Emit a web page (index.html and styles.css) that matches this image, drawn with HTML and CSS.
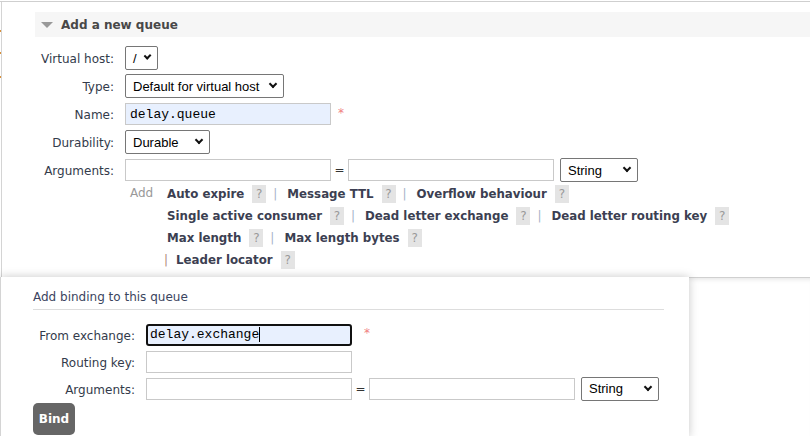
FILE: index.html
```html
<!DOCTYPE html>
<html>
<head>
<meta charset="utf-8">
<link rel="stylesheet" href="styles.css">
</head>
<body>
<div class="top">
  <div class="edge">
    <span class="tick t1"></span>
    <span class="tick t2"></span>
    <span class="tick t3"></span>
  </div>
  <div class="queue-panel">
    <div class="section-head"><span class="tri"></span>Add a new queue</div>
    <div class="form">
      <label class="lbl">Virtual host:</label>
      <div class="ctl"><span class="sel sel-vhost">/<span class="chev"></span></span></div>

      <label class="lbl">Type:</label>
      <div class="ctl"><span class="sel sel-type">Default for virtual host<span class="chev"></span></span></div>

      <label class="lbl">Name:</label>
      <div class="ctl"><span class="inp filled mono">delay.queue</span><span class="req">*</span></div>

      <label class="lbl">Durability:</label>
      <div class="ctl"><span class="sel sel-dur">Durable<span class="chev"></span></span></div>

      <label class="lbl">Arguments:</label>
      <div class="ctl"><span class="inp"></span><span class="eq">=</span><span class="inp"></span><span class="sel sel-str">String<span class="chev"></span></span></div>

      <div></div>
      <div class="extras">
        <span class="add">Add</span>
        <div class="help-lines">
          <div class="hl"><b>Auto expire</b><span class="q">?</span><span class="pipe">|</span><b>Message TTL</b><span class="q">?</span><span class="pipe">|</span><b>Overflow behaviour</b><span class="q">?</span></div>
          <div class="hl"><b>Single active consumer</b><span class="q">?</span><span class="pipe">|</span><b>Dead letter exchange</b><span class="q">?</span><span class="pipe">|</span><b>Dead letter routing key</b><span class="q">?</span></div>
          <div class="hl"><b>Max length</b><span class="q">?</span><span class="pipe">|</span><b>Max length bytes</b><span class="q">?</span></div>
          <div class="hl shift"><span class="pipe brown">|</span><b>Leader locator</b><span class="q">?</span></div>
        </div>
      </div>
    </div>
  </div>
</div>
<div class="bottom">
  <div class="binding">
    <div class="bind-title">Add binding to this queue</div>
    <div class="form form2">
      <label class="lbl">From exchange:</label>
      <div class="ctl"><span class="inp filled focus mono">delay.exchange<span class="caret"></span></span><span class="req">*</span></div>

      <label class="lbl">Routing key:</label>
      <div class="ctl"><span class="inp"></span></div>

      <label class="lbl">Arguments:</label>
      <div class="ctl"><span class="inp"></span><span class="eq">=</span><span class="inp"></span><span class="sel sel-str">String<span class="chev"></span></span></div>
    </div>
    <button class="bind-btn">Bind</button>
  </div>
  <div class="filler"></div>
</div>
</body>
</html>
```

FILE: styles.css
```css
* { box-sizing: border-box; }
html, body { margin: 0; padding: 0; background: #fff; }
body {
  width: 810px;
  height: 436px;
  overflow: hidden;
  padding-top: 1px;
  font-family: "DejaVu Sans", Verdana, sans-serif;
  color: #484848;
}
.top {
  display: flex;
  height: 276px;
  border-top: 1px solid #cfcfcf;
}
.edge {
  width: 1px;
  display: flex;
  flex-direction: column;
}
.tick { display: block; width: 1px; height: 2px; background: #d9903a; }
.t1 { margin-top: 28px; }
.t2 { margin-top: 20px; }
.t3 { margin-top: 22px; }
.queue-panel {
  flex: 1;
  border-left: 1px solid #d4d4d4;
  padding-top: 10px;
}
.section-head {
  margin-left: 33px;
  height: 25px;
  background: #f6f6f6;
  display: flex;
  align-items: center;
  font-weight: bold;
  font-size: 12px;
  color: #484848;
}
.tri {
  width: 0; height: 0;
  margin: 0 8px 0 6px;
  border-left: 6px solid transparent;
  border-right: 6px solid transparent;
  border-top: 6px solid #999;
}
.form {
  display: grid;
  grid-template-columns: 112px auto;
  column-gap: 11px;
  row-gap: 4px;
  margin-top: 9px;
  font-size: 12px;
}
.lbl {
  text-align: right;
  align-self: center;
  color: #333b4b;
  padding-top: 2px;
}
.ctl { display: flex; align-items: center; height: 24px; }
.sel {
  display: flex;
  align-items: center;
  height: 24px;
  border: 1px solid #767676;
  border-radius: 2px;
  padding: 0 6px 0 7px;
  font-family: "Liberation Sans", Arial, sans-serif;
  font-size: 13px;
  color: #000;
  justify-content: space-between;
}
.chev {
  width: 6px; height: 6px;
  border-right: 2px solid #111;
  border-bottom: 2px solid #111;
  transform: rotate(45deg);
  margin: -4px 1px 0 8px;
}
.sel-vhost { width: 33px; padding-left: 7px; }
.sel-type { width: 159px; }
.sel-dur { width: 85px; }
.sel-str { width: 78px; margin-left: 6px; }
.inp {
  display: flex;
  align-items: center;
  width: 206px;
  height: 22px;
  border: 1px solid #c9c9c9;
  padding: 0 4px;
  background: #fff;
  font-size: 13px;
  color: #000;
}
.mono { font-family: "Liberation Mono", "Courier New", monospace; }
.filled { background: #e8f0fe; }
.focus { border: 2px solid #111; border-radius: 3px; padding-left: 2px; }
.caret { display: inline-block; width: 1px; height: 15px; background: #000; margin-left: 0; }
.req { color: #f08080; font-size: 12px; margin-left: 7px; margin-top: -3px; }
.form2 .req { margin-left: 12px; }
.eq { width: 17px; text-align: center; font-size: 12px; color: #333; }
.extras {
  display: flex;
  align-items: flex-start;
  margin-top: -3px;
}
.add { color: #999; font-size: 12px; margin: 3px 0 0 5px; width: 37px; }
.help-lines { display: flex; flex-direction: column; }
.hl {
  display: flex;
  align-items: center;
  height: 22px;
  font-size: 11.8px;
}
.hl b { color: #3c3f52; font-weight: bold; }
.q {
  display: inline-block;
  width: 14px; height: 18px;
  line-height: 18px;
  text-align: center;
  background: #e4e4e4;
  color: #999;
  margin-left: 8px;
  font-size: 12px;
}
.pipe { color: #a6b4c8; margin: 0 10px 0 7px; font-size: 12px; }
.pipe.brown { color: #b08a78; margin: 0 8px 0 0; }
.shift { margin-left: -3px; }
.bottom { display: flex; }
.binding {
  width: 689px;
  height: 160px;
  background: #fff;
  border-left: 1px solid #d4d4d4;
  box-shadow: 0 0 9px rgba(0,0,0,0.22);
  position: relative;
  z-index: 1;
  padding: 13px 25px 0 32px;
}
.filler {
  flex: 1;
  border-top: 1px solid #d0d0d0;
  box-shadow: inset 0 5px 5px -4px rgba(0,0,0,0.12);
}
.bind-title {
  font-size: 12px;
  color: #3b4560;
  padding-bottom: 5px;
  border-bottom: 1px solid #ddd;
}
.form2 {
  grid-template-columns: 102px auto;
  column-gap: 11px;
  row-gap: 4px;
  margin-top: 13px;
}
.form2 .ctl { height: 23px; }
.form2 .inp { height: 22px; }
.bind-btn {
  margin-top: 3px;
  width: 42px;
  height: 32px;
  border: 0;
  border-radius: 5px;
  background: #666;
  color: #fff;
  font-family: "DejaVu Sans", Verdana, sans-serif;
  font-weight: bold;
  font-size: 12px;
  padding: 0;
}
```
